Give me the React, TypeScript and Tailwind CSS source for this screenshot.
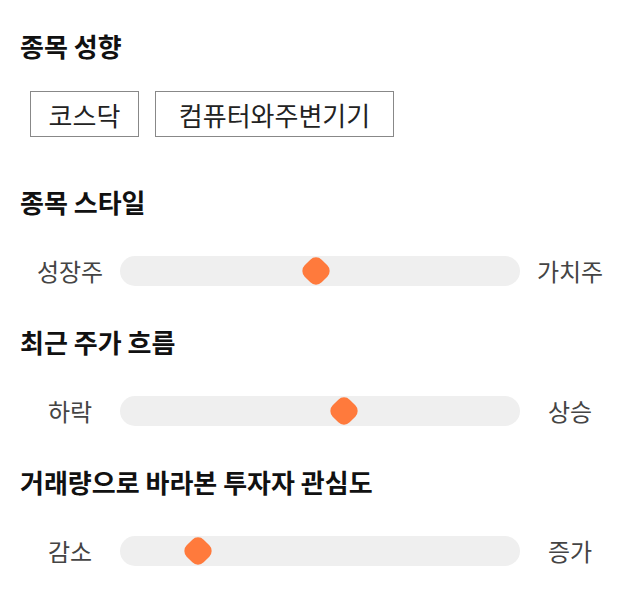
import React from 'react';

const font = { fontFamily: '"Noto Sans CJK KR", "Noto Sans", sans-serif' };

const Slider: React.FC<{ left: string; right: string; value: number }> = ({ left, right, value }) => (
  <div className="flex items-center h-[30px]">
    <span className="w-[100px] text-center text-[24px] leading-[30px] text-[#444]">{left}</span>
    <div className="relative flex-1 h-[30px] rounded-full bg-[#efefef]">
      <div
        className="absolute top-1/2 w-[24px] h-[24px] -translate-x-1/2 -translate-y-1/2 rotate-45 rounded-[8px] bg-[#ff7a3c]"
        style={{ left: `${value}%` }}
      />
    </div>
    <span className="w-[100px] text-center text-[24px] leading-[30px] text-[#444]">{right}</span>
  </div>
);

const Heading: React.FC<{ children: React.ReactNode }> = ({ children }) => (
  <h2 className="text-[26px] leading-[30px] font-bold text-[#111]">{children}</h2>
);

export default function App() {
  return (
    <div className="bg-white w-[640px] h-[606px] px-5 pt-[31px]" style={font}>
      <Heading>종목 성향</Heading>
      <div className="flex gap-4 mt-[30px] ml-[10px]">
        <div className="w-[109px] h-[46px] flex items-center justify-center border border-[#888] text-[26px] text-[#222]">
          코스닥
        </div>
        <div className="w-[239px] h-[46px] flex items-center justify-center border border-[#888] text-[26px] text-[#222]">
          컴퓨터와주변기기
        </div>
      </div>
      <div className="mt-[50px]">
        <Heading>종목 스타일</Heading>
      </div>
      <div className="mt-[39px]">
        <Slider left="성장주" right="가치주" value={49} />
      </div>
      <div className="mt-[41px]">
        <Heading>최근 주가 흐름</Heading>
      </div>
      <div className="mt-[39px]">
        <Slider left="하락" right="상승" value={56} />
      </div>
      <div className="mt-[41px]">
        <Heading>거래량으로 바라본 투자자 관심도</Heading>
      </div>
      <div className="mt-[39px]">
        <Slider left="감소" right="증가" value={19.5} />
      </div>
    </div>
  );
}
